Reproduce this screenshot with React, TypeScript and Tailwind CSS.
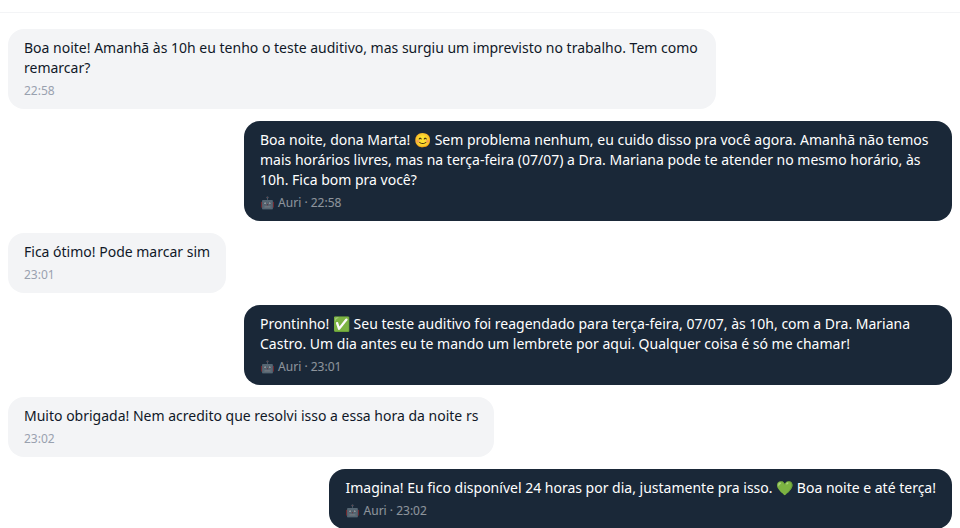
const messages = [
  { id: 1, fromBot: false, text: "Boa noite! Amanhã às 10h eu tenho o teste auditivo, mas surgiu um imprevisto no trabalho. Tem como remarcar?", time: "22:58" },
  { id: 2, fromBot: true, text: "Boa noite, dona Marta! 😊 Sem problema nenhum, eu cuido disso pra você agora. Amanhã não temos mais horários livres, mas na terça-feira (07/07) a Dra. Mariana pode te atender no mesmo horário, às 10h. Fica bom pra você?", time: "22:58" },
  { id: 3, fromBot: false, text: "Fica ótimo! Pode marcar sim", time: "23:01" },
  { id: 4, fromBot: true, text: "Prontinho! ✅ Seu teste auditivo foi reagendado para terça-feira, 07/07, às 10h, com a Dra. Mariana Castro. Um dia antes eu te mando um lembrete por aqui. Qualquer coisa é só me chamar!", time: "23:01" },
  { id: 5, fromBot: false, text: "Muito obrigada! Nem acredito que resolvi isso a essa hora da noite rs", time: "23:02" },
  { id: 6, fromBot: true, text: "Imagina! Eu fico disponível 24 horas por dia, justamente pra isso. 💚 Boa noite e até terça!", time: "23:02" },
];

export default function App() {
  return (
    <div className="h-screen overflow-hidden bg-white font-['Noto_Sans',sans-serif]">
      <div className="h-[13px] border-b border-gray-100"></div>
      <div className="flex flex-col gap-3 px-2 pt-4">
        {messages.map((msg) =>
          msg.fromBot ? (
            <div key={msg.id} className="flex justify-end">
              <div className="max-w-[75%] rounded-2xl bg-[#1a2838] px-4 pt-[9px] pb-2.5 text-sm leading-5 text-white">
                <p>{msg.text}</p>
                <p className="mt-[5px] text-xs leading-4 opacity-50">🤖 Auri · {msg.time}</p>
              </div>
            </div>
          ) : (
            <div key={msg.id} className="flex justify-start">
              <div className="max-w-[75%] rounded-2xl bg-gray-100 px-4 pt-[9px] pb-2.5 text-sm leading-5 text-gray-900">
                <p>{msg.text}</p>
                <p className="mt-[5px] text-xs leading-4 text-gray-400">{msg.time}</p>
              </div>
            </div>
          )
        )}
      </div>
    </div>
  );
}
